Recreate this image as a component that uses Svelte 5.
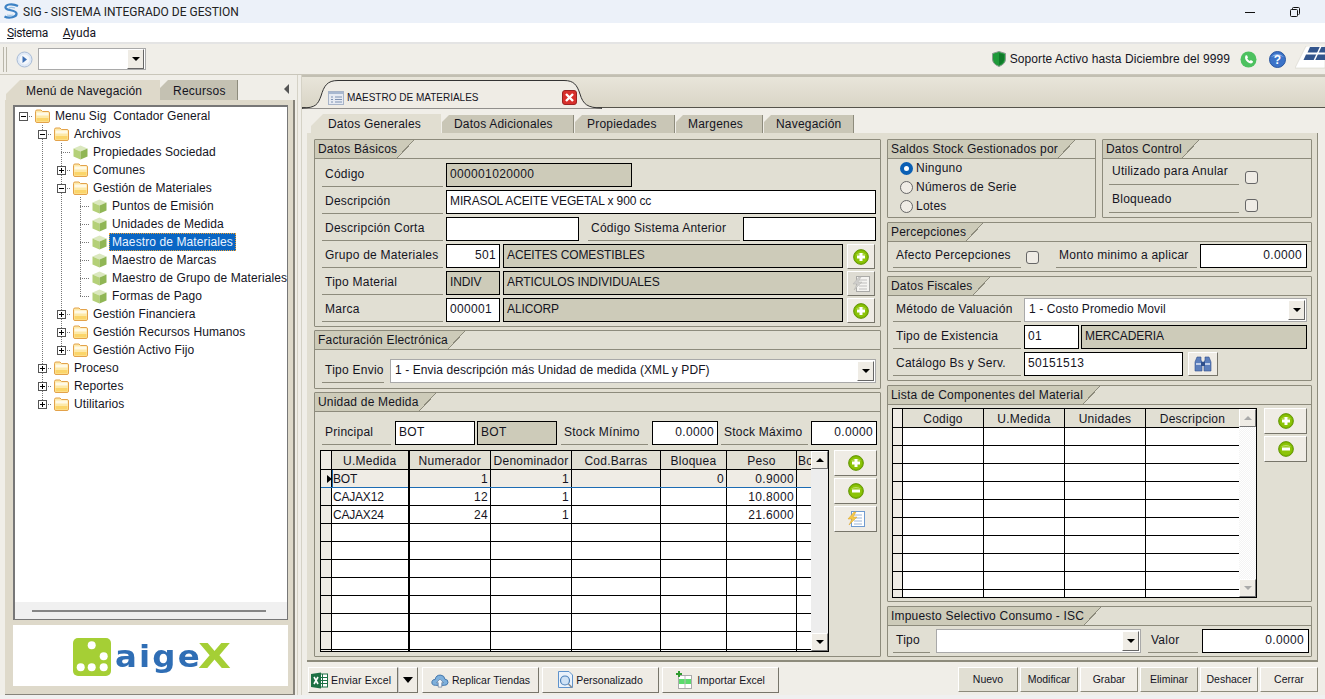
<script>
	const F = 'folder';
	const C = 'cube';
	// tree rows: level, label, icon, expander, guide columns that stay drawn, last child
	const tree = [
		{ lvl: 0, t: 'Menu Sig  Contador General', i: F, box: '-', g: [], last: true },
		{ lvl: 1, t: 'Archivos', i: F, box: '-', g: [0] },
		{ lvl: 2, t: 'Propiedades Sociedad', i: C, g: [0, 1] },
		{ lvl: 2, t: 'Comunes', i: F, box: '+', g: [0, 1] },
		{ lvl: 2, t: 'Gestión de Materiales', i: F, box: '-', g: [0, 1] },
		{ lvl: 3, t: 'Puntos de Emisión', i: C, g: [0, 1, 2] },
		{ lvl: 3, t: 'Unidades de Medida', i: C, g: [0, 1, 2] },
		{ lvl: 3, t: 'Maestro de Materiales', i: C, g: [0, 1, 2], sel: true },
		{ lvl: 3, t: 'Maestro de Marcas', i: C, g: [0, 1, 2] },
		{ lvl: 3, t: 'Maestro de Grupo de Materiales', i: C, g: [0, 1, 2] },
		{ lvl: 3, t: 'Formas de Pago', i: C, g: [0, 1, 2], last: true },
		{ lvl: 2, t: 'Gestión Financiera', i: F, box: '+', g: [0, 1] },
		{ lvl: 2, t: 'Gestión Recursos Humanos', i: F, box: '+', g: [0, 1] },
		{ lvl: 2, t: 'Gestión Activo Fijo', i: F, box: '+', g: [0, 1], last: true },
		{ lvl: 1, t: 'Proceso', i: F, box: '+', g: [0] },
		{ lvl: 1, t: 'Reportes', i: F, box: '+', g: [0] },
		{ lvl: 1, t: 'Utilitarios', i: F, box: '+', g: [0], last: true }
	];

	const subTabs = ['Datos Adicionales', 'Propiedades', 'Margenes', 'Navegación'];

	const uomCols = [11, 77, 82, 81, 89, 66, 70, 15];
	const uomHead = ['', 'U.Medida', 'Numerador', 'Denominador', 'Cod.Barras', 'Bloquea', 'Peso', 'Bo'];
	const uomRows = [
		['BOT', '1', '1', '', '0', '0.9000'],
		['CAJAX12', '12', '1', '', '', '10.8000'],
		['CAJAX24', '24', '1', '', '', '21.6000']
	];
	const uomBlank = Array(8);

	const compCols = [10, 81, 81, 81, 94];
	const compHead = ['', 'Codigo', 'U.Medida', 'Unidades', 'Descripcion'];
	const compBlank = Array(10);

	const actions = [
		{ t: 'Nuevo', dim: true },
		{ t: 'Modificar', dim: true },
		{ t: 'Grabar' },
		{ t: 'Eliminar', dim: true },
		{ t: 'Deshacer' },
		{ t: 'Cerrar' }
	];
</script>

{#snippet folder()}
	<svg class="ico" width="15" height="14" viewBox="0 0 15 14">
		<path d="M.5 2.5 Q.5 1 2 1 H6 L7.5 2.5 H13 Q14.5 2.5 14.5 4 V12 Q14.5 13.5 13 13.5 H2 Q.5 13.5 .5 12Z" fill="#fde9a8" stroke="#e3a24a" />
		<rect x="1.5" y="3.5" width="12" height="3" fill="#fff9e6" />
		<rect x="1.5" y="9" width="12" height="3.5" fill="#fbd56a" />
	</svg>
{/snippet}

{#snippet cube()}
	<svg class="ico" width="15" height="15" viewBox="0 0 15 15">
		<path d="M7.5 .5 L14.5 3.5 L7.5 6.5 L.5 3.5Z" fill="#dbe8bf" />
		<path d="M.5 3.5 L7.5 6.5 V14.5 L.5 11.5Z" fill="#b4d078" />
		<path d="M14.5 3.5 L7.5 6.5 V14.5 L14.5 11.5Z" fill="#90b655" />
	</svg>
{/snippet}

{#snippet expander(kind)}
	<svg class="box" width="9" height="9" viewBox="0 0 9 9">
		<rect x=".5" y=".5" width="8" height="8" fill="#fff" stroke="#555" />
		<path d="M2 4.5 H7" stroke="#000" />
		{#if kind === '+'}<path d="M4.5 2 V7" stroke="#000" />{/if}
	</svg>
{/snippet}

{#snippet round(minus)}
	<svg width="16" height="16" viewBox="0 0 18 18">
		<circle cx="9" cy="9" r="8.3" fill="#7fb800" stroke="#5e9000" />
		<circle cx="9" cy="9" r="6.8" fill="#8cc408" />
		<path d="M3 7 Q9 2 15 7 Q9 5 3 7Z" fill="#c2e070" />
		<path d="M4.5 9 H13.5" stroke="#fff" stroke-width="3.4" />
		{#if !minus}<path d="M9 4.5 V13.5" stroke="#fff" stroke-width="3.4" />{/if}
	</svg>
{/snippet}

{#snippet sheet(dim)}
	<svg width="20" height="18" viewBox="0 0 20 18" class:dim>
		<rect x="5.5" y="1.5" width="13" height="15" fill="#fff" stroke="#6f9bd0" />
		<path d="M8 5 H16 M8 8 H16 M8 11 H16 M8 14 H16" stroke="#9db6d8" />
		<path d="M8 2 L2 9 H6 L3 15 L11 7 H7 L10 2Z" fill="#f3c84a" stroke="#d9a128" stroke-width=".5" />
	</svg>
{/snippet}

{#snippet sec_head(title)}
	<header class="sec-head"><span>{title}</span><i></i></header>
{/snippet}

{#snippet combo(text)}
	<div class="combo"><span>{text}</span><b class="drop"><em></em></b></div>
{/snippet}

<div class="app">
	<div class="title">
		<svg width="16" height="17" viewBox="0 0 16 17" fill="none">
			<path d="M15 3 C9 0 2 1.5 2.5 4.5 C3 8 13 6.5 13.5 10.5 C14 14 6 16 1.5 13.5" stroke="#3d82c4" stroke-width="2.2" />
			<path d="M12 5 C8 4 5 4.5 6 6 M10 12 C8 12.5 6 12.5 4 12" stroke="#9cc4e6" stroke-width="1.2" />
		</svg>
		<span class="title-text">SIG - SISTEMA INTEGRADO DE GESTION</span>
		<svg class="min" width="10" height="10" viewBox="0 0 10 10"><path d="M0 5.5 H10" stroke="#111" /></svg>
		<svg class="restore" width="10" height="10" viewBox="0 0 10 10">
			<rect x=".5" y="2.5" width="7" height="7" rx="1" fill="none" stroke="#111" />
			<path d="M2.5 2.5 V1.5 Q2.5 .5 3.5 .5 H8.5 Q9.5 .5 9.5 1.5 V6.5 Q9.5 7.5 8.5 7.5" fill="none" stroke="#111" />
		</svg>
	</div>
	<nav class="menu"><span class="m-first"><u>S</u>istema</span><span><u>A</u>yuda</span></nav>

	<div class="toolbar">
		<i class="grip"></i>
		<svg class="play" width="17" height="17" viewBox="0 0 17 17">
			<circle cx="8.5" cy="8.5" r="7.5" fill="#dfe9f6" stroke="#a9bcd6" />
			<circle cx="8.5" cy="8.5" r="5" fill="#f4f7fb" />
			<path d="M6.5 5 L11 8.5 L6.5 12Z" fill="#3d6fb4" />
		</svg>
		<div class="combo mini"><span></span><b class="drop"><em></em></b></div>
		<div class="support">
			<svg width="14" height="16" viewBox="0 0 14 16">
				<path d="M7 .5 L13.5 2.5 V8 Q13.5 13 7 15.5 Q.5 13 .5 8 V2.5Z" fill="#1f9a3a" stroke="#8a9a90" />
				<path d="M7 2 L12 3.5 V8 Q12 12 7 14Z" fill="#0f7a2a" />
			</svg>
			<span class="support-t">Soporte Activo hasta Diciembre del 9999</span>
			<svg class="wa" width="17" height="17" viewBox="0 0 17 17">
				<circle cx="8.5" cy="8.5" r="8" fill="#4dc15f" />
				<path d="M5.5 4.5 L7 4.3 L8 6.6 L7.2 7.6 Q8.2 9.4 9.8 10 L10.8 9 L13 10.2 L12.6 11.8 Q10.5 13.4 7.5 11 Q4 8 5.5 4.5Z" fill="#fff" />
			</svg>
			<svg class="help" width="17" height="17" viewBox="0 0 17 17">
				<circle cx="8.5" cy="8.5" r="8" fill="#3b73c8" stroke="#2a57a0" />
				<path d="M2 6 Q8 0 15 6 Q8 3.5 2 6Z" fill="#8fb4ea" />
				<text x="8.5" y="13" text-anchor="middle" font-size="12" font-weight="700" fill="#fff" font-family="Liberation Sans">?</text>
			</svg>
			<svg class="brand" width="30" height="28" viewBox="0 0 30 28">
				<path d="M0 22 L11 0 H30 V22Z" fill="#fff" stroke="#cfccc0" stroke-width=".5" />
				<path d="M15 1 H30 V6.5 H12.5Z M11 8.5 H30 V14 H8.5Z" fill="#33558c" />
				<path d="M26 0 L19 15" stroke="#fff" stroke-width="1.5" />
			</svg>
		</div>
	</div>

	<div class="main">
		<aside class="left">
			<div class="left-tabs">
				<div class="ltab on">Menú de Navegación</div>
				<div class="ltab">Recursos</div>
				<i class="collapse"></i>
			</div>
			<div class="left-page">
				<div class="tree">
					<div class="tree-rows">
						{#each tree as r}
							<div class="node">
								{#each Array(r.lvl) as _, k}
									<span class="guide" class:on={k > 0 && r.g.includes(k - 1)}></span>
								{/each}
								<span class="conn" class:root={r.lvl === 0} class:end={r.last}>
									{#if r.box}{@render expander(r.box)}{/if}
								</span>
								{#if r.i === 'folder'}{@render folder()}{:else}{@render cube()}{/if}
								<span class="node-t" class:sel={r.sel}>{r.t}</span>
							</div>
						{/each}
					</div>
					<div class="hbar"><i></i></div>
				</div>
				<div class="logo">
					<svg width="38" height="38" viewBox="0 0 38 38">
						<rect width="38" height="38" rx="5" fill="#a5cf35" />
						<g fill="#fff">
							<circle cx="18.7" cy="7.3" r="4" />
							<circle cx="30.7" cy="18.3" r="4" />
							<circle cx="7.7" cy="29.3" r="4" />
							<circle cx="18.7" cy="29.3" r="4" />
							<circle cx="30.7" cy="29.3" r="4" />
						</g>
					</svg>
					<span class="logo-a">aige</span><span class="logo-x">X</span>
				</div>
			</div>
		</aside>

		<div class="split"></div>

		<section class="work">
			<div class="doc-tabs">
				<div class="doc-tab">
					<svg class="doc-shape" width="300" height="29" viewBox="0 0 300 29">
						<path d="M0 28 C14 28 16 24 19 16 C22 6 25 .5 36 .5 H262 C272 .5 275 5 278 14 C281 24 285 28 300 28 V29 H0Z" fill="#efece5" stroke="#333" />
					</svg>
					<svg class="doc-ico" width="16" height="14" viewBox="0 0 16 14">
						<rect x=".5" y=".5" width="15" height="13" fill="#e6eaf2" stroke="#a8b4c8" />
						<rect x="1" y="1" width="14" height="2" fill="#a8b8d0" />
						<path d="M3 6 H5 M7 6 H14 M3 8.5 H5 M7 8.5 H14 M3 11 H5 M7 11 H14" stroke="#7f92b2" />
					</svg>
					<span>MAESTRO DE MATERIALES</span>
					<svg class="doc-x" width="15" height="15" viewBox="0 0 15 15">
						<rect x=".5" y=".5" width="14" height="14" rx="2.5" fill="#d8302c" stroke="#9a2222" />
						<path d="M4 4 L11 11 M11 4 L4 11" stroke="#fff" stroke-width="2.4" />
					</svg>
				</div>
			</div>

			<div class="sub-tabs">
				<div class="stab on">Datos Generales</div>
				{#each subTabs as t}
					<div class="stab">{t}</div>
				{/each}
			</div>

			<div class="page">
				<div class="col col-l">
					<section class="sec basicos">
						{@render sec_head('Datos Básicos')}
						<div class="rows">
							<div class="row">
								<label class="lbl w121">Código</label>
								<div class="inp ro w186">000001020000</div>
							</div>
							<div class="row">
								<label class="lbl w121">Descripción</label>
								<div class="inp caps w430">MIRASOL ACEITE VEGETAL x 900 cc</div>
							</div>
							<div class="row">
								<label class="lbl w121">Descripción Corta</label>
								<div class="inp w133"></div>
								<label class="lbl w152 ml6">Código Sistema Anterior</label>
								<div class="inp w133"></div>
							</div>
							<div class="row">
								<label class="lbl w121">Grupo de Materiales</label>
								<div class="inp num w54">501</div>
								<div class="inp ro caps w340">ACEITES COMESTIBLES</div>
								<button class="mini-btn">{@render round(false)}</button>
							</div>
							<div class="row">
								<label class="lbl w121">Tipo Material</label>
								<div class="inp ro caps w54">INDIV</div>
								<div class="inp ro caps w340">ARTICULOS INDIVIDUALES</div>
								<button class="mini-btn off">{@render sheet(true)}</button>
							</div>
							<div class="row">
								<label class="lbl w121">Marca</label>
								<div class="inp w54">000001</div>
								<div class="inp ro caps w340">ALICORP</div>
								<button class="mini-btn">{@render round(false)}</button>
							</div>
						</div>
					</section>

					<section class="sec factura">
						{@render sec_head('Facturación Electrónica')}
						<div class="rows">
							<div class="row">
								<label class="lbl w62">Tipo Envio</label>
								<div class="w486 ml3">{@render combo('1 - Envia descripción más Unidad de medida (XML y PDF)')}</div>
							</div>
						</div>
					</section>

					<section class="sec unidad">
						{@render sec_head('Unidad de Medida')}
						<div class="rows">
							<div class="row">
								<label class="lbl w69">Principal</label>
								<div class="inp w80 ml1">BOT</div>
								<div class="inp ro w80 ml-1">BOT</div>
								<label class="lbl w87 ml1">Stock Mínimo</label>
								<div class="inp num w66 ml1">0.0000</div>
								<label class="lbl w87">Stock Máximo</label>
								<div class="inp num w66">0.0000</div>
							</div>
						</div>
						<div class="grid-row">
							<div class="gridbox uom">
								<div class="grid-clip">
									<table>
										<colgroup>{#each uomCols as c}<col width={c} />{/each}</colgroup>
										<thead><tr>{#each uomHead as h}<th>{h}</th>{/each}</tr></thead>
										<tbody>
											{#each uomRows as r, idx}
												<tr class:cur={idx === 0}>
													<td class="ind">{#if idx === 0}<i class="mark"></i>{/if}</td>
													<td class="code">{r[0]}</td>
													{#each r.slice(1) as v}<td class="n">{v}</td>{/each}
													<td></td>
												</tr>
											{/each}
											{#each uomBlank as _}
												<tr>{#each uomCols as c, k}<td class:ind={k === 0}></td>{/each}</tr>
											{/each}
										</tbody>
									</table>
								</div>
								<div class="vbar">
									<b class="sb"><em class="up"></em></b>
									<span></span>
									<b class="sb"><em class="down"></em></b>
								</div>
							</div>
							<div class="tools">
								<button class="tool">{@render round(false)}</button>
								<button class="tool">{@render round(true)}</button>
								<button class="tool">{@render sheet(false)}</button>
							</div>
						</div>
					</section>
				</div>

				<div class="col">
					<div class="pair">
						<section class="sec saldos">
							{@render sec_head('Saldos Stock Gestionados por')}
							<div class="radios">
								<div class="radio on"><i></i>Ninguno</div>
								<div class="radio"><i></i>Números de Serie</div>
								<div class="radio"><i></i>Lotes</div>
							</div>
						</section>
						<section class="sec control">
							{@render sec_head('Datos Control')}
							<div class="ctl-rows">
								<div class="ctl"><label class="lbl">Utilizado para Anular</label><i class="check"></i></div>
								<div class="ctl"><label class="lbl">Bloqueado</label><i class="check"></i></div>
							</div>
						</section>
					</div>

					<section class="sec percep">
						{@render sec_head('Percepciones')}
						<div class="rows">
							<div class="row">
								<label class="lbl w128">Afecto Percepciones</label>
								<i class="check low ml2"></i>
								<label class="lbl w141 ml14">Monto minimo a aplicar</label>
								<div class="inp num w107">0.0000</div>
							</div>
						</div>
					</section>

					<section class="sec fiscal">
						{@render sec_head('Datos Fiscales')}
						<div class="rows">
							<div class="row">
								<label class="lbl w128">Método de Valuación</label>
								<div class="w283">{@render combo('1 - Costo Promedio Movil')}</div>
							</div>
							<div class="row">
								<label class="lbl w128">Tipo de Existencia</label>
								<div class="inp w55">01</div>
								<div class="inp ro caps w226 ml-1">MERCADERIA</div>
							</div>
							<div class="row">
								<label class="lbl w128">Catálogo Bs y Serv.</label>
								<div class="inp w159">50151513</div>
								<button class="mini-btn wide">
									<svg width="18" height="16" viewBox="0 0 18 16">
										<path d="M3 1 H7 V5 H8 V15 H1 V6 Z M11 1 H15 L17 6 V15 H10 V5 H11Z" fill="#5d7fbc" stroke="#2f4f8c" stroke-width=".6" />
										<path d="M2 8 H7 M11 8 H16" stroke="#dfe8f6" stroke-width="1.5" />
										<rect x="7" y="6" width="4" height="4" fill="#2f4f8c" />
									</svg>
								</button>
							</div>
						</div>
					</section>

					<section class="sec lista">
						{@render sec_head('Lista de Componentes del Material')}
						<div class="grid-row">
							<div class="gridbox comp">
								<div class="grid-clip">
									<table>
										<colgroup>{#each compCols as c}<col width={c} />{/each}</colgroup>
										<thead><tr>{#each compHead as h}<th>{h}</th>{/each}</tr></thead>
										<tbody>
											{#each compBlank as _}
												<tr>{#each compCols as c, k}<td class:ind={k === 0}></td>{/each}</tr>
											{/each}
										</tbody>
									</table>
								</div>
								<div class="vbar off">
									<b class="sb"><em class="up"></em></b>
									<span></span>
									<b class="sb"><em class="down"></em></b>
								</div>
							</div>
							<div class="tools">
								<button class="tool">{@render round(false)}</button>
								<button class="tool">{@render round(true)}</button>
							</div>
						</div>
					</section>

					<section class="sec isc">
						{@render sec_head('Impuesto Selectivo Consumo - ISC')}
						<div class="rows">
							<div class="row">
								<label class="lbl w37">Tipo</label>
								<div class="w205 ml3">{@render combo('')}</div>
								<label class="lbl w50 ml4">Valor</label>
								<div class="inp num w107 ml1">0.0000</div>
							</div>
						</div>
					</section>
				</div>
			</div>

			<footer class="foot">
				<div class="split-btn">
					<button class="act">
						<svg width="17" height="17" viewBox="0 0 17 17">
							<rect x="7" y="2" width="9.5" height="13" fill="#fff" stroke="#1d7044" />
							<path d="M7 5.5 H16 M7 8.5 H16 M7 11.5 H16 M11.5 2 V15" stroke="#1d7044" />
							<path d="M0 2 L10 .5 V16.5 L0 15Z" fill="#1d7044" />
							<path d="M3 5 L7 12 M7 5 L3 12" stroke="#fff" stroke-width="1.6" />
						</svg>
						Enviar Excel
					</button>
					<button class="arrow"><em></em></button>
				</div>
				<button class="act rep">
					<svg width="18" height="16" viewBox="0 0 20 18">
						<path d="M5 15 Q0 15 1 10.5 Q2 8 4.5 8.5 Q5.5 3 11 3.5 Q15 4 15.5 8 Q19.5 8.5 19 12 Q18.5 15 15 15Z" fill="#7eb0dc" stroke="#3a6ea5" />
						<path d="M10 8 L14 12 H12 V17 H8 V12 H6Z" fill="#f4f7fb" stroke="#55708f" stroke-width=".7" />
					</svg>
					Replicar Tiendas
				</button>
				<button class="act per">
					<svg width="16" height="18" viewBox="0 0 16 18">
						<path d="M.5 .5 H11 L14.5 4 V16.5 H.5Z" fill="#eaf2fb" stroke="#5f93cc" />
						<circle cx="7" cy="9.5" r="4.5" fill="#cfe2f5" stroke="#4a7fb8" stroke-width="1.2" />
						<path d="M10.5 13 L14 16.5" stroke="#8a8a8a" stroke-width="1.5" />
					</svg>
					Personalizado
				</button>
				<button class="act imp">
					<svg width="16" height="18" viewBox="0 0 16 18">
						<rect x="2.5" y="4.5" width="13" height="13" fill="#fff" stroke="#aaa" />
						<rect x="3" y="8" width="12" height="5" fill="#5cdb6e" />
						<path d="M0 3 H6 M3 0 V6" stroke="#2f9a2f" stroke-width="2" />
						<path d="M9 5 V17" stroke="#bbb" />
					</svg>
					Importar Excel
				</button>
				<div class="actions">
					{#each actions as a}
						<button class="cmd" class:dim={a.dim}>{a.t}</button>
					{/each}
				</div>
			</footer>
		</section>
	</div>
	<div class="status"></div>
</div>

<style>
	:global(body) {
		margin: 0;
		background: #f0eee8;
	}

	.app {
		width: 1325px;
		height: 699px;
		display: flex;
		flex-direction: column;
		overflow: hidden;
		font: 12px/1 'Liberation Sans', Arial, sans-serif;
		letter-spacing: 0.25px;
		color: #14141e;
	}

	/* window chrome */
	.title {
		height: 23px;
		flex: none;
		display: flex;
		align-items: center;
		background: #ecf1f9;
		padding-left: 3px;
	}
	.title-text {
		margin-left: 4px;
		font-family: Roboto, sans-serif;
		letter-spacing: 0;
		color: #222;
	}
	.min {
		margin-left: auto;
	}
	.restore {
		margin: 0 25px 0 35px;
	}
	.menu {
		height: 19px;
		flex: none;
		display: flex;
		gap: 15px;
		align-items: center;
		padding-left: 7px;
		background: #fff;
		border-bottom: 2px solid #e4e4e4;
		font-family: Roboto, sans-serif;
		letter-spacing: 0;
	}
	.m-first {
		letter-spacing: -0.4px;
	}
	.toolbar {
		height: 31px;
		flex: none;
		display: flex;
		align-items: center;
		background: #f0eee8;
		border-bottom: 1px solid #c9c6ba;
		box-sizing: border-box;
	}
	.grip {
		width: 2px;
		height: 25px;
		margin-left: 3px;
		border: 1px solid #b9b6aa;
		border-width: 0 1px;
	}
	.play {
		margin-left: 9px;
	}
	.mini {
		width: 108px;
		height: 22px;
		margin-left: 5px;
	}
	.support {
		margin-left: auto;
		display: flex;
		align-items: center;
		height: 100%;
		gap: 4px;
	}
	.support-t {
		letter-spacing: 0.09px;
	}
	.wa {
		margin-left: 6px;
	}
	.help {
		margin-left: 8px;
	}
	.brand {
		margin-left: 5px;
		align-self: flex-end;
	}

	.main {
		flex: 1;
		display: flex;
		min-height: 0;
	}

	/* left navigator */
	.left {
		width: 297px;
		flex: none;
		display: flex;
		flex-direction: column;
		padding-top: 5px;
		box-sizing: border-box;
	}
	.left-tabs {
		height: 20px;
		flex: none;
		display: flex;
		align-items: stretch;
		padding-left: 6px;
	}
	.ltab {
		display: flex;
		align-items: center;
		background: #c4c1b2;
		width: 78px;
		padding: 2px 0 0 13px;
		box-sizing: border-box;
		clip-path: polygon(8px 0, 100% 0, 100% 100%, 0 100%, 0 8px);
		border-right: 1px solid #8d8b7c;
	}
	.ltab.on {
		width: 154px;
		background: #ded9ca;
		padding-left: 20px;
		letter-spacing: 0.15px;
		clip-path: polygon(14px 0, 100% 0, 100% 100%, 0 100%, 0 14px);
		border: 0;
	}
	.collapse {
		margin: 4px 8px 0 auto;
		width: 0;
		height: 0;
		border: 5px solid transparent;
		border-left-width: 0;
		border-right: 5px solid #555;
	}
	.left-page {
		flex: 1;
		display: flex;
		flex-direction: column;
		margin: 0 2px 0 5px;
		padding: 5px 5px 9px 8px;
		background: #ded9ca;
		border-right: 2px solid #86837a;
		border-bottom: 1px solid #86837a;
		min-height: 0;
		box-sizing: border-box;
	}
	.tree {
		height: 515px;
		flex: none;
		background: #fff;
		display: flex;
		flex-direction: column;
		box-sizing: border-box;
		border: 2px solid #777;
		border-width: 2px 1px 1px 2px;
		letter-spacing: 0.1px;
	}
	.tree-rows {
		flex: 1;
		overflow: hidden;
		margin-left: -1px;
	}
	.node {
		height: 18px;
		display: flex;
		align-items: center;
		white-space: pre;
	}
	.guide,
	.conn {
		width: 19px;
		height: 18px;
		flex: none;
		display: flex;
		align-items: center;
		justify-content: center;
	}
	.guide.on {
		background-image: repeating-linear-gradient(to bottom, #777 0 1px, transparent 1px 2px);
		background-size: 1px 100%;
		background-position: 9px 0;
		background-repeat: no-repeat;
	}
	.conn {
		background-image:
			repeating-linear-gradient(to bottom, #777 0 1px, transparent 1px 2px),
			repeating-linear-gradient(to right, #777 0 1px, transparent 1px 2px);
		background-size: 1px 100%, 11px 1px;
		background-position: 9px 0, 9px 9px;
		background-repeat: no-repeat;
		margin-right: 2px;
	}
	.conn.end {
		background-size: 1px 10px, 11px 1px;
	}
	.conn.root {
		background-image: repeating-linear-gradient(to right, #777 0 1px, transparent 1px 2px);
		background-size: 11px 1px;
		background-position: 9px 9px;
	}
	.box {
		flex: none;
	}
	.ico {
		flex: none;
		margin-right: 5px;
	}
	.node-t {
		padding: 2px;
		margin-left: -3px;
		border: 1px solid transparent;
	}
	.node-t.sel {
		background: #0a66c4;
		color: #eaf4ff;
		border: 1px dotted #f0a030;
	}
	.hbar {
		height: 17px;
		flex: none;
		background: #f0f0f0;
		display: flex;
		align-items: center;
		padding: 0 21px 0 17px;
		box-sizing: border-box;
	}
	.hbar i {
		flex: 1;
		height: 2px;
		background: #868686;
	}
	.logo {
		height: 61px;
		margin-top: 5px;
		flex: none;
		background: #fff;
		display: flex;
		align-items: center;
		padding: 2px 0 0 60px;
		box-sizing: border-box;
	}
	.logo-a,
	.logo-x {
		display: inline-block;
		font: 700 30px/1 'DejaVu Sans', sans-serif;
		transform-origin: 0 50%;
	}
	.logo-a {
		color: #2f6eb5;
		letter-spacing: 2px;
		margin: 0 3px 0 4px;
		transform: scaleX(1.08);
	}
	.logo-x {
		color: #a5cf35;
		font-size: 33px;
		transform: scaleX(1.3);
	}

	.split {
		width: 5px;
		flex: none;
		box-sizing: border-box;
		border-left: 1px solid #d5d2c6;
		border-right: 1px solid #d5d2c6;
	}

	/* document area */
	.work {
		flex: 1;
		display: flex;
		flex-direction: column;
		min-width: 0;
	}
	.doc-tabs {
		height: 33px;
		flex: none;
		padding-top: 5px;
		box-sizing: border-box;
		background: linear-gradient(#e8e5da, #d9d5c6);
		border-bottom: 1px solid #55534b;
		border-top: 2px solid #c2bfb2;
	}
	.doc-tab {
		position: relative;
		width: 283px;
		height: 28px;
		display: flex;
		align-items: center;
		padding: 7px 0 0 26px;
		box-sizing: border-box;
		font-size: 10px;
		letter-spacing: 0;
		margin-top: -2px;
	}
	.doc-shape {
		position: absolute;
		left: 0;
		top: 0;
	}
	.doc-ico,
	.doc-x,
	.doc-tab span {
		position: relative;
	}
	.doc-tab span {
		margin-left: 3px;
	}
	.doc-x {
		margin-left: auto;
		margin-right: 8px;
	}
	.sub-tabs {
		height: 25px;
		flex: none;
		display: flex;
		align-items: flex-end;
		padding-left: 9px;
		gap: 1px;
		background: #f0eee8;
		box-sizing: border-box;
		letter-spacing: 0.2px;
	}
	.stab {
		height: 18px;
		box-sizing: border-box;
		display: flex;
		align-items: center;
		background: #c9c6b6;
		padding-left: 12px;
		clip-path: polygon(7px 0, 100% 0, 100% 100%, 0 100%, 0 7px);
		border-right: 1px solid #8d8b7c;
	}
	.stab:nth-child(1) {
		width: 130px;
		height: 19px;
		background: #e1ded1;
		padding-left: 17px;
		border: 0;
		clip-path: polygon(12px 0, 100% 0, 100% 100%, 0 100%, 0 12px);
	}
	.stab:nth-child(2) { width: 132px; }
	.stab:nth-child(3) { width: 100px; }
	.stab:nth-child(4) { width: 87px; }
	.stab:nth-child(5) { width: 90px; }

	.page {
		height: 529px;
		flex: none;
		margin: 0 7px 0 5px;
		padding: 6px 6px 3px 7px;
		display: grid;
		grid-template-columns: 567px 425px;
		column-gap: 6px;
		background: #e1ded1;
		border-bottom: 2px solid #8d8b7c;
		border-right: 1px solid #8d8b7c;
		box-sizing: border-box;
	}
	.col {
		display: flex;
		flex-direction: column;
		gap: 4px;
		min-width: 0;
	}
	.col-l {
		gap: 3px;
	}
	.sec {
		border: 1px solid #8d8b7c;
		background: #e1dfd3;
		box-sizing: border-box;
		flex: none;
		border-radius: 1px;
	}
	.sec-head {
		height: 18px;
		display: flex;
		border-bottom: 1px solid #8d8b7c;
		box-sizing: content-box;
	}
	.sec-head span {
		background: #cdcbb9;
		padding: 0 0 0 3px;
		line-height: 19px;
		white-space: nowrap;
		letter-spacing: 0.2px;
	}
	.sec-head i {
		width: 17px;
		background: linear-gradient(to bottom right, #cdcbb9 calc(50% - 0.5px), #8d8b7c calc(50% - 0.5px), #8d8b7c calc(50% + 0.5px), transparent calc(50% + 0.5px));
	}

	.rows {
		display: flex;
		flex-direction: column;
		gap: 3px;
		padding: 4px 0 0 7px;
	}
	.row {
		display: flex;
		gap: 3px;
		height: 24px;
	}
	.lbl {
		display: flex;
		align-items: center;
		height: 24px;
		padding: 0 0 2px 3px;
		box-sizing: border-box;
		border-bottom: 1px solid #8d8b7c;
		white-space: nowrap;
		flex: none;
	}
	.inp {
		height: 24px;
		border: 1px solid #000;
		background: #fff;
		display: flex;
		align-items: center;
		padding: 0 3px 2px;
		box-sizing: border-box;
		white-space: nowrap;
		flex: none;
		letter-spacing: 0.35px;
	}
	.inp.caps {
		letter-spacing: -0.12px;
	}
	.inp.ro {
		background: #cdcbb9;
	}
	.inp.num {
		justify-content: flex-end;
	}
	.inp.w107 {
		padding-right: 4px;
	}
	.combo {
		height: 24px;
		border: 1px solid #a9a9a9;
		background: #fff;
		display: flex;
		align-items: center;
		justify-content: space-between;
		padding: 0 1px 0 4px;
		box-sizing: border-box;
		letter-spacing: 0.08px;
	}
	.combo span {
		padding-bottom: 2px;
	}
	.combo.mini {
		height: 22px;
	}
	.drop {
		width: 17px;
		height: 20px;
		background: #efece5;
		border: 1px solid;
		border-color: #fff #666 #666 #fff;
		box-sizing: border-box;
		display: flex;
		align-items: center;
		justify-content: center;
	}
	.drop em {
		width: 0;
		height: 0;
		border: 4px solid transparent;
		border-top: 4px solid #000;
		border-bottom: 0;
	}
	.mini-btn {
		margin-left: 1px;
		width: 28px;
		height: 25px;
		padding: 0;
		background: #efece5;
		border: 1px solid;
		border-color: #fff #77756a #77756a #fff;
		display: flex;
		align-items: center;
		justify-content: center;
	}
	.mini-btn.off {
		background: #dedcd3;
	}
	.mini-btn.wide {
		width: 30px;
		height: 24px;
		margin-left: 2px;
	}
	svg.dim {
		opacity: 0.7;
		filter: grayscale(1);
	}

	.w37 { width: 37px; }
	.w50 { width: 50px; }
	.w54 { width: 54px; }
	.w55 { width: 55px; }
	.w62 { width: 62px; }
	.w66 { width: 66px; }
	.w69 { width: 69px; }
	.w80 { width: 80px; }
	.w87 { width: 87px; }
	.w107 { width: 107px; }
	.w121 { width: 121px; }
	.w128 { width: 128px; }
	.w133 { width: 133px; }
	.w141 { width: 141px; }
	.w152 { width: 152px; }
	.w159 { width: 159px; }
	.w186 { width: 186px; }
	.w205 { width: 205px; }
	.w226 { width: 226px; }
	.w283 { width: 283px; }
	.w340 { width: 340px; }
	.w430 { width: 430px; }
	.w486 { width: 486px; }
	.ml-1 { margin-left: -1px; }
	.ml1 { margin-left: 1px; }
	.ml2 { margin-left: 2px; }
	.ml3 { margin-left: 3px; }
	.ml4 { margin-left: 4px; }
	.ml6 { margin-left: 6px; }
	.ml14 { margin-left: 14px; }

	.basicos { height: 188px; }
	.factura { height: 59px; }
	.factura .rows { padding-top: 9px; }
	.unidad { height: 265px; }
	.unidad .rows { padding-top: 9px; }

	.grid-row {
		display: flex;
		padding: 5px 0 0 5px;
		gap: 5px;
	}
	.gridbox {
		display: flex;
		border: 1px solid #000;
		box-sizing: border-box;
		background: #fff;
		overflow: hidden;
	}
	.gridbox.uom {
		width: 509px;
		height: 202px;
	}
	.gridbox.comp {
		width: 365px;
		height: 190px;
	}
	.grid-clip {
		flex: 1;
		overflow: hidden;
		min-width: 0;
	}
	table {
		border-collapse: collapse;
		table-layout: fixed;
		width: 1px;
		margin: -1px 0 0 -1px;
	}
	th,
	td {
		padding: 0 2px;
		border: 1px solid #000;
		overflow: hidden;
		white-space: nowrap;
		font-weight: 400;
		box-sizing: border-box;
	}
	th {
		height: 19px;
		background: #e1dfd3;
		text-align: center;
		padding: 1px 1px 0;
	}
	td {
		height: 18px;
	}
	th:first-child,
	.ind {
		background: #efece5;
	}
	.uom th:nth-child(2),
	.uom td:nth-child(2) {
		border-right: 2px solid #000;
	}
	.uom th:last-child {
		text-align: left;
	}
	td.n {
		text-align: right;
		letter-spacing: 0.35px;
	}
	td.code {
		letter-spacing: -0.2px;
		padding-left: 1px;
	}
	tr.cur td {
		background: #efece5;
		border-bottom-color: #1c6cb4;
	}
	tr.cur td:nth-child(2) {
		box-shadow: inset 1px 0 #1c6cb4;
	}
	.mark {
		display: inline-block;
		width: 0;
		height: 0;
		border: 4px solid transparent;
		border-left: 5px solid #000;
		border-right: 0;
		margin-left: 4px;
	}
	.vbar {
		width: 17px;
		flex: none;
		display: flex;
		flex-direction: column;
		background: #ededed;
	}
	.vbar span {
		flex: 1;
	}
	.vbar.off span {
		background: repeating-conic-gradient(#f4f4f4 0 25%, #fff 0 50%) 0 0 / 2px 2px;
	}
	.sb {
		height: 18px;
		flex: none;
		background: #efece5;
		border: 1px solid;
		border-color: #fff #777 #777 #fff;
		box-sizing: border-box;
		display: flex;
		align-items: center;
		justify-content: center;
	}
	.sb em {
		width: 0;
		height: 0;
		border: 4px solid transparent;
	}
	.sb .up {
		border-top: 0;
		border-bottom: 4px solid #000;
	}
	.sb .down {
		border-bottom: 0;
		border-top: 4px solid #000;
	}
	.off .sb .up {
		border-bottom-color: #aaa;
	}
	.off .sb .down {
		border-top-color: #aaa;
	}
	.tools {
		display: flex;
		flex-direction: column;
		gap: 2px;
	}
	.tool {
		width: 43px;
		height: 26px;
		padding: 0;
		background: #efece5;
		border: 1px solid;
		border-color: #fff #77756a #77756a #fff;
		display: flex;
		align-items: center;
		justify-content: center;
	}

	.pair {
		display: flex;
		gap: 6px;
		height: 79px;
		flex: none;
	}
	.saldos {
		width: 209px;
	}
	.control {
		width: 210px;
	}
	.radios {
		display: flex;
		flex-direction: column;
		gap: 5px;
		padding: 2px 0 0 12px;
	}
	.radio {
		display: flex;
		align-items: center;
		height: 14px;
		gap: 3px;
	}
	.radio i {
		width: 13px;
		height: 13px;
		border-radius: 50%;
		border: 1px solid #666;
		background: #efece5;
		box-sizing: border-box;
	}
	.radio.on i {
		background: #fff;
		border: 4px solid #0a5fb4;
	}
	.ctl-rows {
		display: flex;
		flex-direction: column;
		gap: 4px;
		padding: 2px 0 0 6px;
	}
	.ctl {
		display: flex;
		align-items: flex-end;
		gap: 6px;
	}
	.ctl .lbl {
		width: 130px;
		align-items: flex-start;
		padding-top: 4px;
	}
	.check {
		width: 13px;
		height: 13px;
		flex: none;
		box-sizing: border-box;
		border: 1px solid #666;
		border-radius: 3px;
		background: #efece5;
		margin-bottom: 1px;
	}
	.check.low {
		align-self: flex-end;
		margin-bottom: 4px;
	}
	.percep { height: 50px; }
	.percep .rows { padding: 2px 0 0 5px; }
	.fiscal { height: 105px; }
	.fiscal .rows { padding: 2px 0 0 5px; }
	.lista { height: 217px; }
	.lista .grid-row {
		padding: 3px 0 0 4px;
		gap: 7px;
	}
	.isc { height: 51px; }
	.isc .rows { padding: 3px 0 0 5px; }

	/* bottom bar */
	.foot {
		flex: 1;
		display: flex;
		align-items: flex-start;
		padding: 5px 7px 0 6px;
		gap: 3px;
		background: #f0eee8;
		min-height: 0;
	}
	.foot button {
		font: inherit;
		font-size: 10.5px;
		letter-spacing: 0;
		color: inherit;
	}
	.split-btn {
		display: flex;
		margin-right: 1px;
	}
	.act {
		height: 26px;
		padding: 0;
		background: #efece5;
		border: 1px solid;
		border-color: #fff #77756a #77756a #fff;
		display: flex;
		align-items: center;
		justify-content: center;
		gap: 3px;
		width: 117px;
	}
	.split-btn .act {
		width: 90px;
		justify-content: flex-start;
		padding-left: 2px;
		letter-spacing: 0.15px !important;
	}
	.act.per {
		gap: 2px;
	}
	.act.imp {
		gap: 5px;
	}
	.arrow {
		width: 20px;
		height: 26px;
		padding: 0;
		background: #efece5;
		border: 1px solid;
		border-color: #fff #77756a #77756a #ccc;
		display: flex;
		align-items: center;
		justify-content: center;
	}
	.arrow em {
		width: 0;
		height: 0;
		border: 5px solid transparent;
		border-top: 6px solid #000;
		border-bottom: 0;
	}
	.actions {
		margin-left: auto;
		display: flex;
		gap: 2px;
	}
	.cmd {
		width: 58px;
		height: 25px;
		padding: 0;
		background: #efece5;
		border: 1px solid;
		border-color: #fff #8d8b7c #8d8b7c #fff;
	}
	.cmd:first-child {
		width: 60px;
	}
	.cmd.dim {
		background: #e1dfd3;
	}
	.status {
		height: 4px;
		flex: none;
		background: #f0f0f0;
	}
</style>
